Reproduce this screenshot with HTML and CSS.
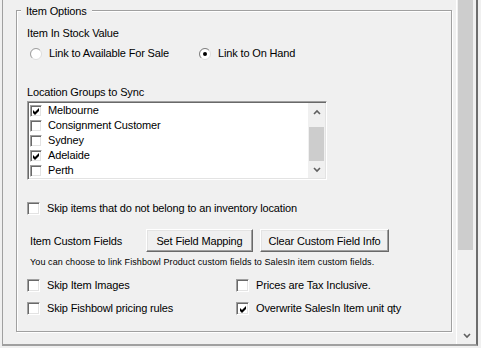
FILE: index.html
```html
<!DOCTYPE html>
<html lang="en">
<head>
    <meta charset="UTF-8">
    <title>Item Options</title>
    <link rel="stylesheet" href="styles.css">
</head>
<body>

    <div class="panel">
        <div class="content">
            <fieldset class="group">
                <legend>Item Options</legend>

                <div class="caption stock">Item In Stock Value</div>
                <div class="radios">
                    <label class="radio-opt wide">
                        <svg class="radio" width="12" height="12" viewBox="0 0 12 12"><circle cx="6" cy="6" r="5.5" fill="#fff" stroke="#dcdcdc"/><path d="M2.1 9.9A5.5 5.5 0 0 1 9.9 2.1" fill="none" stroke="#a0a0a0"/></svg>
                        Link to Available For Sale
                    </label>
                    <label class="radio-opt">
                        <svg class="radio" width="12" height="12" viewBox="0 0 12 12"><circle cx="6" cy="6" r="5.5" fill="#fff" stroke="#dcdcdc"/><path d="M2.1 9.9A5.5 5.5 0 0 1 9.9 2.1" fill="none" stroke="#808080"/><circle cx="6" cy="6" r="2" fill="#000"/></svg>
                        Link to On Hand
                    </label>
                </div>

                <div class="caption locations">Location Groups to Sync</div>
                <div class="listbox">
                    <ul class="items">
                        <li><span class="cb small checked"><svg width="7" height="7" viewBox="0 0 7 7"><path d="M0 2L2 4L6 0L6 3L2 7L0 5Z"/></svg></span>Melbourne</li>
                        <li><span class="cb small"></span>Consignment Customer</li>
                        <li><span class="cb small"></span>Sydney</li>
                        <li><span class="cb small checked"><svg width="7" height="7" viewBox="0 0 7 7"><path d="M0 2L2 4L6 0L6 3L2 7L0 5Z"/></svg></span>Adelaide</li>
                        <li><span class="cb small"></span>Perth</li>
                    </ul>
                    <div class="list-scroll">
                        <div class="arrow-btn"><svg width="8" height="6" viewBox="0 0 8 6"><path d="M1 5L4 2L7 5" fill="none" stroke="#606060" stroke-width="1.6"/></svg></div>
                        <div class="track"><div class="list-thumb"></div></div>
                        <div class="arrow-btn"><svg width="8" height="6" viewBox="0 0 8 6"><path d="M1 1L4 4L7 1" fill="none" stroke="#606060" stroke-width="1.6"/></svg></div>
                    </div>
                </div>

                <label class="check-row skip"><span class="cb"></span>Skip items that do not belong to an inventory location</label>

                <div class="fields-row">
                    <span class="fields-label">Item Custom Fields</span>
                    <button class="btn btn-map" type="button">Set Field Mapping</button>
                    <button class="btn btn-clear" type="button">Clear Custom Field Info</button>
                </div>
                <p class="hint">You can choose to link Fishbowl Product custom fields to SalesIn item custom fields.</p>

                <div class="opts">
                    <label class="check-row"><span class="cb"></span>Skip Item Images</label>
                    <label class="check-row"><span class="cb"></span>Prices are Tax Inclusive.</label>
                    <label class="check-row"><span class="cb"></span>Skip Fishbowl pricing rules</label>
                    <label class="check-row"><span class="cb checked"><svg width="7" height="7" viewBox="0 0 7 7"><path d="M0 2L2 4L6 0L6 3L2 7L0 5Z"/></svg></span>Overwrite SalesIn Item unit qty</label>
                </div>
            </fieldset>
        </div>

        <div class="scrollbar">
            <div class="thumb"></div>
            <div class="arrow-btn main"><svg width="8" height="6" viewBox="0 0 8 6"><path d="M1 1L4 4L7 1" fill="none" stroke="#606060" stroke-width="1.6"/></svg></div>
        </div>
    </div>

</body>
</html>
```

FILE: styles.css
```css
body {
    margin: 0;
    background: #f0f0f0;
    font-family: "Liberation Sans", Arial, sans-serif;
    font-size: 11px;
    letter-spacing: -0.15px;
    color: #000;
}

.panel {
    display: flex;
    width: 476px;
    height: 346px;
    margin-left: 2px;
    box-sizing: border-box;
    border-left: 1px solid #a0a0a0;
    border-right: 2px solid #6d6d6d;
    border-bottom: 2px solid #a0a0a0;
}

.content {
    flex: 1;
}

/* group box */
.group {
    margin: 2px 0 0 13px;
    width: 436px;
    box-sizing: border-box;
    padding: 0 0 16px 10px;
    border: 1px solid #a0a0a0;
    box-shadow: inset 1px 1px 0 #fff, 1px 1px 0 #fff;
}

.group legend {
    margin-left: -6px;
    padding: 3px 5px 0;
    line-height: 13px;
    background: #f0f0f0;
}

.caption {
    line-height: 13px;
}

.stock {
    margin-top: 9px;
}

.locations {
    margin-top: 26px;
}

.radios {
    display: flex;
    margin-top: 7px;
    padding-left: 3px;
    line-height: 13px;
}

.radio-opt {
    display: flex;
    align-items: center;
    gap: 7px;
}

.radio-opt.wide {
    width: 169px;
}

/* list box */
.listbox {
    display: flex;
    width: 300px;
    height: 79px;
    margin-top: 2px;
    box-sizing: border-box;
    border: 1px solid;
    border-color: #a0a0a0 #fff #fff #a0a0a0;
    box-shadow: inset 1px 1px 0 #696969, inset -1px -1px 0 #e3e3e3;
    background: #fff;
    padding: 1px;
}

.items {
    flex: 1;
    margin: 0;
    padding: 0 0 0 1px;
    list-style: none;
}

.items li {
    display: flex;
    align-items: center;
    gap: 6px;
    height: 15px;
    line-height: 15px;
}

.list-scroll {
    width: 17px;
    display: flex;
    flex-direction: column;
    background: #f0f0f0;
}

.list-scroll .track {
    flex: 1;
}

.list-thumb {
    margin: 7px 1px 0 1px;
    height: 34px;
    background: #cdcdcd;
}

.arrow-btn {
    height: 17px;
    display: flex;
    align-items: center;
    justify-content: center;
}

/* checkboxes */
.cb {
    display: inline-flex;
    align-items: center;
    justify-content: center;
    flex: none;
    width: 13px;
    height: 13px;
    box-sizing: border-box;
    background: #fff;
    border: 1px solid;
    border-color: #a0a0a0 #fff #fff #a0a0a0;
    box-shadow: inset 1px 1px 0 #696969, inset -1px -1px 0 #e3e3e3;
}

.cb.small {
    width: 12px;
    height: 12px;
}

.cb svg {
    margin: 1px 0 0 1px;
}

.check-row {
    display: flex;
    align-items: center;
    gap: 7px;
    line-height: 13px;
}

.skip {
    margin-top: 22px;
}

/* custom fields */
.fields-row {
    display: flex;
    align-items: center;
    margin-top: 14px;
    padding-left: 3px;
    height: 23px;
}

.fields-label {
    width: 116px;
}

.btn {
    height: 23px;
    margin: 0;
    padding: 0;
    font: inherit;
    letter-spacing: inherit;
    color: #000;
    background: #f0f0f0;
    border: 1px solid;
    border-color: #fff #696969 #696969 #fff;
    box-shadow: inset -1px -1px 0 #a0a0a0, inset 1px 1px 0 #e3e3e3;
}

.btn-map {
    width: 107px;
}

.btn-clear {
    width: 129px;
    margin-left: 7px;
}

.hint {
    margin: 5px 0 0;
    padding-left: 3px;
    font-size: 9px;
    letter-spacing: 0.1px;
    line-height: 11px;
}

.opts {
    display: grid;
    grid-template-columns: 209px 1fr;
    row-gap: 10px;
    margin-top: 11px;
}

/* outer scroll bar */
.scrollbar {
    width: 20px;
    box-sizing: border-box;
    border-left: 1px solid #fff;
    display: flex;
    flex-direction: column;
}

.scrollbar .thumb {
    margin-left: 1px;
    width: 15px;
    height: 250px;
    background: #cdcdcd;
}

.scrollbar .main {
    margin-top: auto;
}
```
